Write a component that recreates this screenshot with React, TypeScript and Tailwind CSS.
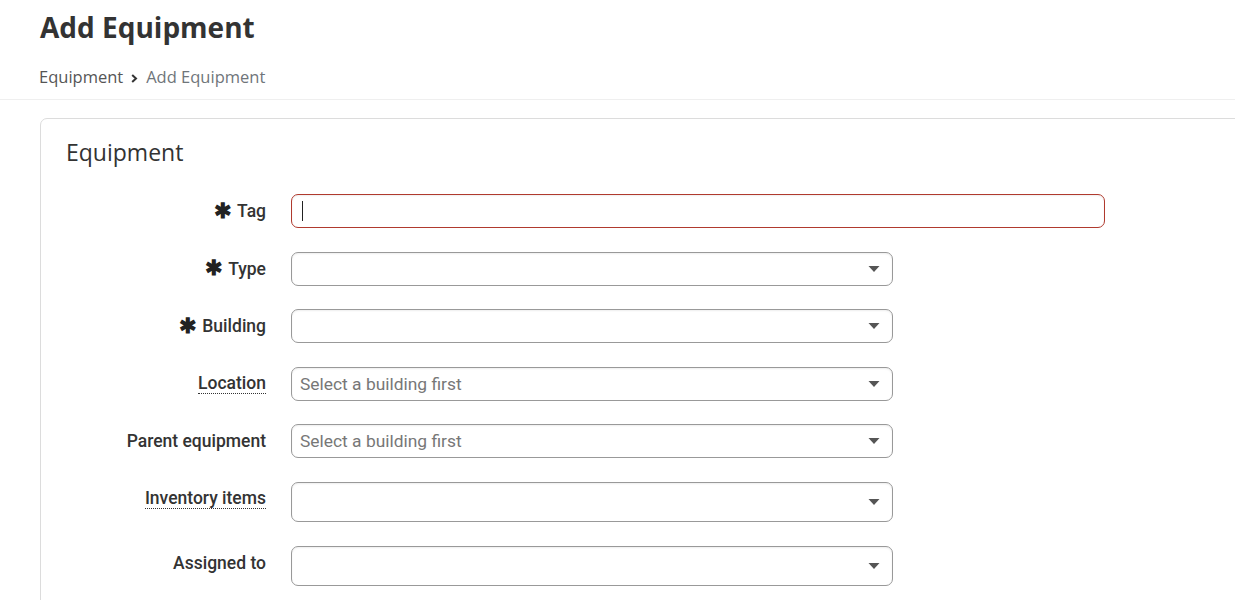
import type { ReactNode } from "react";

const labelFont = { fontFamily: "Roboto, 'Liberation Sans', sans-serif" };

function Caret() {
  return (
    <svg width="12" height="7" viewBox="0 0 12 7" className="absolute right-[12px] top-1/2 -translate-y-1/2">
      <path d="M0.5 0.5 L11.5 0.5 L6 6.5 Z" fill="#555" />
    </svg>
  );
}

function Field({ label, required, hint, children }: { label: string; required?: boolean; hint?: boolean; children: ReactNode }) {
  return (
    <div className="flex items-start">
      <div className="flex h-[34px] w-[200px] shrink-0 items-center justify-end text-[17.5px] font-medium text-[#333]" style={labelFont}>
        {required && <span className="mr-[5px] text-[21px] font-bold leading-none text-[#222]">✱</span>}
        <span className={hint ? "border-b border-dotted border-[#333] leading-[20px]" : "leading-[20px]"}>{label}</span>
      </div>
      <div className="ml-[25px]">{children}</div>
    </div>
  );
}

function Select({ placeholder, tall }: { placeholder?: string; tall?: boolean }) {
  return (
    <div
      className={
        "relative flex w-[602px] items-center rounded-[7px] border border-[#999] bg-white pl-[8px] text-[17.4px] text-[#777] shadow-[inset_0_1px_2px_rgba(0,0,0,0.07)] " +
        (tall ? "h-[40px]" : "h-[34px]")
      }
      style={labelFont}
    >
      {placeholder}
      <Caret />
    </div>
  );
}

export default function App() {
  return (
    <div className="min-h-[600px] overflow-hidden bg-white" style={{ fontFamily: "'Open Sans', 'Noto Sans', sans-serif" }}>
      <div className="border-b border-[#efefef] pl-[40px] pb-[10px]">
        <h1 className="pt-[7px] text-[28px] font-bold leading-[40px] text-[#333]">Add Equipment</h1>
        <div className="mt-[18px] flex h-[24px] items-center text-[16.5px] text-[#555]">
          <span className="-ml-px">Equipment</span>
          <svg width="7" height="9" viewBox="0 0 7 9" className="mx-[8px] mt-[3px]">
            <path d="M1.2 1 L5 4.5 L1.2 8" fill="none" stroke="#333" strokeWidth="2" />
          </svg>
          <span className="text-[#6f757a]">Add Equipment</span>
        </div>
      </div>
      <div className="ml-[40px] -mr-[20px] mt-[18px] h-[500px] rounded-tl-[7px] border border-[#dcdcdc] pl-[25px]">
        <h2 className="pt-[18px] text-[23px] leading-[30px] text-[#333]">Equipment</h2>
        <div className="mt-[27px] flex flex-col gap-[23.6px]">
          <Field label="Tag" required>
            <div className="flex h-[34px] w-[814px] items-center rounded-[7px] border border-[#b03a2e] pl-[10px] shadow-[inset_0_1px_2px_rgba(0,0,0,0.07)]">
              <span className="h-[20px] w-px bg-[#222]" />
            </div>
          </Field>
          <Field label="Type" required>
            <Select />
          </Field>
          <Field label="Building" required>
            <Select />
          </Field>
          <Field label="Location" hint>
            <Select placeholder="Select a building first" />
          </Field>
          <Field label="Parent equipment">
            <Select placeholder="Select a building first" />
          </Field>
          <Field label="Inventory items" hint>
            <Select tall />
          </Field>
          <Field label="Assigned to">
            <Select tall />
          </Field>
        </div>
      </div>
    </div>
  );
}
